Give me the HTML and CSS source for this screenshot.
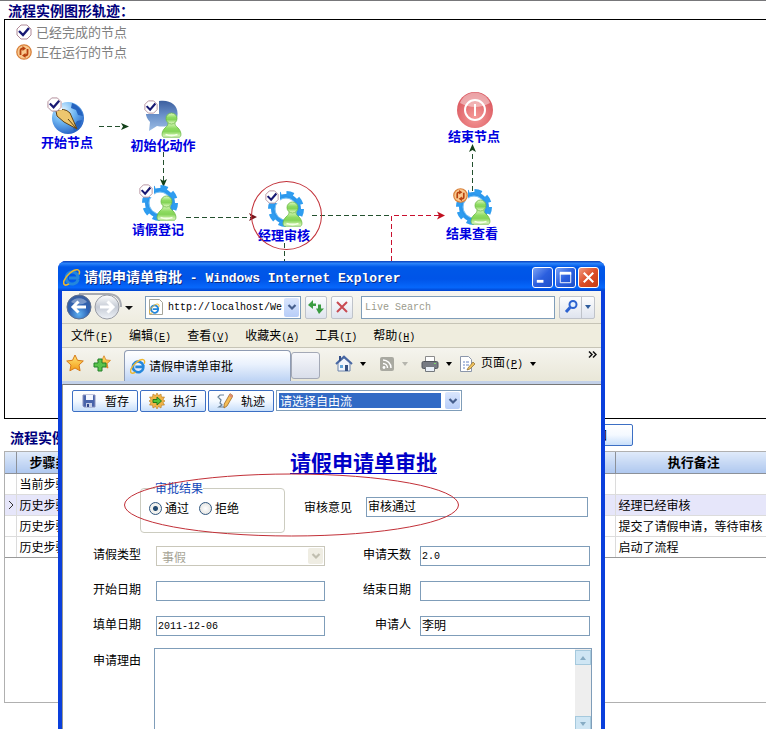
FILE: index.html
```html
<!DOCTYPE html>
<html lang="zh-CN">
<head>
<meta charset="utf-8">
<title>流程实例图形轨迹</title>
<link rel="stylesheet" href="styles.css">
</head>
<body>
<svg class="sprite" width="0" height="0" aria-hidden="true">
  <defs>
    <radialGradient id="globe" cx=".35" cy=".25" r=".85"><stop offset="0" stop-color="#dff3ff"/><stop offset=".45" stop-color="#6fb6f2"/><stop offset="1" stop-color="#1a55bd"/></radialGradient>
    <linearGradient id="bubble" x1="0" y1="0" x2="0" y2="1"><stop offset="0" stop-color="#3c5f9f"/><stop offset=".5" stop-color="#6c92cb"/><stop offset="1" stop-color="#9dbde4"/></linearGradient>
    <linearGradient id="green" x1="0" y1="0" x2="0" y2="1"><stop offset="0" stop-color="#e2fac4"/><stop offset=".4" stop-color="#8fdc62"/><stop offset=".6" stop-color="#84d457"/><stop offset="1" stop-color="#e8fccb"/></linearGradient>
    <radialGradient id="red" cx=".5" cy=".7" r=".7"><stop offset="0" stop-color="#f59a98"/><stop offset="1" stop-color="#d8525a"/></radialGradient>
    <radialGradient id="back" cx=".5" cy=".8" r=".8"><stop offset="0" stop-color="#5fb2f2"/><stop offset=".5" stop-color="#2d62b4"/><stop offset="1" stop-color="#385d9d"/></radialGradient>
    <linearGradient id="forward" x1="0" y1="0" x2="0" y2="1"><stop offset="0" stop-color="#fff"/><stop offset=".5" stop-color="#c5cbd5"/><stop offset="1" stop-color="#eff3f8"/></linearGradient>
    <linearGradient id="gold" x1="0" y1="0" x2="0" y2="1"><stop offset="0" stop-color="#ffe777"/><stop offset="1" stop-color="#f39a16"/></linearGradient>
    <symbol id="done" viewBox="0 0 16 16"><path d="M5 1h6l4 4v6l-4 4H5l-4-4V5z" fill="#fff" stroke="#b08a98"/><path d="M3 7l4 4 6-7" fill="none" stroke="#171873" stroke-width="2.4"/></symbol>
    <symbol id="running" viewBox="0 0 16 16"><circle cx="8" cy="8" r="7.200" fill="#f9c98e" stroke="#d9813c" stroke-width="1.300"/><path d="M4.500 11V6.500q0-2 2.500-2M11.500 5v4.500q0 2-2.500 2" fill="none" stroke="#b8420f" stroke-width="1.800"/><path d="M6.500 2l3.500 2.500L6.500 7zM9.500 9L6 11.500 9.500 14z" fill="#b8420f"/></symbol>
    <symbol id="person" viewBox="0 0 20 26"><path d="M6.500 10.500h7c-.5 2.500 1 3.500 3 5.500 3 2.700 4 8 1.500 9.200H2c-2.500-1.200-1.500-6.500 1.500-9.200 2-2 3.500-3 3-5.500z" fill="url(#green)" stroke="#69b944" stroke-width=".8"/><circle cx="10" cy="6.500" r="5.500" fill="url(#green)" stroke="#69b944" stroke-width=".8"/><path d="M4 22.500q6 2 12 0" fill="none" stroke="#f4ffe6" stroke-width="1.800"/></symbol>
    <symbol id="gear" viewBox="0 0 40 40"><circle cx="22" cy="21" r="12.500" fill="none" stroke="#2b97ec" stroke-width="5"/><circle cx="22" cy="21" r="15.500" fill="none" stroke="#2f9df0" stroke-width="5" stroke-dasharray="7 5.170"/><circle cx="22" cy="21" r="11" fill="none" stroke="#7cc4f6"/><circle cx="22" cy="21" r="10.500" fill="#fff"/><use href="#person" x="18" y="13" width="21" height="26"/></symbol>
    <symbol id="ie" viewBox="0 0 18 18"><path d="M15 11.500A6 6 0 1 1 15 8.500L14.900 10H6" fill="none" stroke="#2487dc" stroke-width="3"/><path d="M16 6.500C18 1 13 0 7 5 1 10-1 16 2 17c1.500.4 3-.5 4-1.200" fill="none" stroke="#eeb72e" stroke-width="1.600"/></symbol>
    <symbol id="star" viewBox="0 0 18 18"><path d="M9 1l2.500 5.300 5.800.7-4.300 4 1.100 5.800L9 14l-5.100 2.800L5 11 .7 7l5.800-.7z" fill="url(#gold)" stroke="#d77a18"/></symbol>
    <symbol id="caret" viewBox="0 0 8 8"><path d="M1 2h6L4 6z" fill="currentColor"/></symbol>
    <symbol id="chevron" viewBox="0 0 10 10"><path d="M1.500 3L5 6.500 8.500 3" fill="none" stroke="currentColor" stroke-width="2.200"/></symbol>
  </defs>
</svg>

<main class="page">
  <h1 class="section-title">流程实例图形轨迹：</h1>
  <section class="canvas">
    <ul class="legend">
      <li><svg class="i16"><use href="#done"/></svg>已经完成的节点</li>
      <li><svg class="i16"><use href="#running"/></svg>正在运行的节点</li>
    </ul>
    <svg class="edges" width="761" height="398" viewBox="5 20 761 398" aria-hidden="true">
      <g fill="none" stroke-dasharray="5 3">
        <path d="M99 126.500h26M163.500 152v29M186 217.500h66M312 215.500h79M284.500 243v22M472.500 191v-40" stroke="#24502f"/>
        <path d="M391.500 216v48M394 215.500h46" stroke="#c8102e"/>
      </g>
      <g fill="#124019"><path d="M121 123l8 3.500-8 3.500 2-3.500zM160 179l3.500 8 3.500-8-3.500 2zM469 152l3.500-8 3.500 8-3.500-2z"/><path d="M249 213l8 4-8 4 2-4z" fill="#72151b"/><path d="M437 211.500l8 4-8 4 2-4z" fill="#c01020"/></g>
    </svg>
    <div class="node start"><svg viewBox="0 0 40 40"><circle cx="21" cy="23" r="16" fill="url(#globe)"/><path d="M25 8c6 2 10 7 11 13l-5-1-2-5-5-2zM30 26l5-1-3 9-5 3-1-5z" fill="#2563bf"/><path d="M9 16q8-4 14 2l7 16-13-7-7-6z" fill="#edc66e" stroke="#604316"/><path d="M29 33l-8-9" stroke="#604316"/><path d="M0 2h15v13H0z" fill="#fff"/><use href="#done" x="0" y="2" width="15" height="15"/></svg><span>开始节点</span></div>
    <div class="node init"><svg viewBox="0 0 40 40"><path d="M16 3C28 1 37 8 34 20c-2 7-11 10-20 8l-8 5 1-9C-2 15 5 5 16 3z" fill="url(#bubble)"/><use href="#person" x="18" y="14" width="21" height="26"/><path d="M0 2h16v14H0z" fill="#fff"/><use href="#done" x="1" y="2" width="14" height="14"/></svg><span>初始化动作</span></div>
    <div class="node apply"><svg viewBox="0 0 40 40"><use href="#gear"/><path d="M0 2h16v13H0z" fill="#fff"/><use href="#done" x="1" y="2" width="14" height="14"/></svg><span>请假登记</span></div>
    <div class="node manager"><svg viewBox="0 0 40 40"><use href="#gear"/><path d="M0 2h16v13H0z" fill="#fff"/><use href="#done" x="1" y="2" width="14" height="14"/></svg><span>经理审核</span></div>
    <div class="node result"><svg viewBox="0 0 40 40"><use href="#gear"/><path d="M0 2h16v13H0z" fill="#fff"/><use href="#running" x="1" y="2" width="15" height="15"/></svg><span>结果查看</span></div>
    <div class="node end"><svg viewBox="0 0 40 40"><circle cx="21" cy="21" r="18" fill="url(#red)"/><path d="M6 14C11 0 31 0 36 14q-15 8-30 0z" fill="#fff" opacity=".45"/><circle cx="21" cy="21" r="10" fill="none" stroke="#fff" stroke-width="2"/><path d="M21 15v12" stroke="#fff" stroke-width="2"/></svg><span>结束节点</span></div>
    <div class="ring" aria-hidden="true"></div>
  </section>

  <div class="history-bar">
    <h2 class="section-title">流程实例</h2>
    <button class="btn" type="button">返回</button>
  </div>
  <section class="history">
    <table>
      <thead><tr><th class="mark"></th><th class="step">步骤类型</th><th>执行备注</th></tr></thead>
      <tbody>
        <tr><td></td><td>当前步骤</td><td></td></tr>
        <tr class="active"><td class="pointer"><svg width="6" height="8" viewBox="0 0 6 8"><path d="M1 0l4 4-4 4" fill="none" stroke="#333"/></svg></td><td>历史步骤</td><td>经理已经审核</td></tr>
        <tr><td></td><td>历史步骤</td><td>提交了请假申请，等待审核</td></tr>
        <tr><td></td><td>历史步骤</td><td>启动了流程</td></tr>
      </tbody>
    </table>
  </section>
</main>

<section class="window" aria-label="请假申请单审批">
  <header class="titlebar">
    <svg class="i18"><use href="#ie"/></svg>
    <span class="caption">请假申请单审批<span class="latin"> - Windows Internet Explorer</span></span>
    <button class="sys" type="button" aria-label="最小化"><svg viewBox="0 0 20 20"><path d="M4 14h7" stroke="#fff" stroke-width="3"/></svg></button>
    <button class="sys" type="button" aria-label="最大化"><svg viewBox="0 0 20 20"><path d="M4.500 5h11v10.500h-11z" fill="none" stroke="#fff"/><path d="M4 5.500h12" stroke="#fff" stroke-width="3"/></svg></button>
    <button class="sys close" type="button" aria-label="关闭"><svg viewBox="0 0 20 20"><path d="M5 5l10 10M15 5L5 15" stroke="#fff" stroke-width="2.200"/></svg></button>
  </header>
  <div class="chrome">
    <div class="address-row">
      <svg class="travel" width="69" height="28" viewBox="0 0 69 28"><path d="M13 1h30q12 1 12 13" fill="none" stroke="#a8abb2" stroke-width="2"/><circle cx="13" cy="14" r="12" fill="url(#back)" stroke="#5f6f8d"/><path d="M5 9a9 7 0 0 1 16 0q-8 5-16 0z" fill="#fff" opacity=".35"/><path d="M20 14H8M12.500 8.500L7 14l5.500 5.500" fill="none" stroke="#fff" stroke-width="3"/><circle cx="41" cy="14" r="12" fill="url(#forward)" stroke="#9a9da5"/><path d="M34 14h12M41.500 8.500L47 14l-5.500 5.500" fill="none" stroke="#fff" stroke-width="3"/><path d="M59 13h8l-4 4z" fill="#111"/></svg>
      <div class="address">
        <svg width="14" height="16" viewBox="0 0 14 16"><path d="M.5.500h10l3 3v12H.5z" fill="#fff" stroke="#a5a59a"/><use href="#ie" x="0" y="4" width="11" height="11"/></svg>
        <input class="latin" type="text" aria-label="地址" value="http://localhost/We">
        <span class="drop"><svg class="i10"><use href="#chevron"/></svg></span>
      </div>
      <button class="tool" type="button" aria-label="刷新"><svg class="i16" viewBox="0 0 16 16"><path d="M5 1L0 6l5 4V7h3V4.500H5zM11 15l5-5.500h-3V5.500h-3v4H8z" fill="#3a9c41"/></svg></button>
      <button class="tool" type="button" aria-label="停止"><svg class="i16" viewBox="0 0 16 16"><path d="M3 3l10 10M13 3L3 13" stroke="#c94a52" stroke-width="2"/></svg></button>
      <input class="search latin" type="text" aria-label="搜索" placeholder="Live Search">
      <button class="tool split" type="button" aria-label="开始搜索"><svg class="i16" viewBox="0 0 16 16"><circle cx="10" cy="5.500" r="3.500" fill="#e4f1ff" stroke="#2c62d0" stroke-width="2"/><path d="M7 8.500L3 13" stroke="#2c62d0" stroke-width="3"/></svg><span class="divider"></span><svg class="i8"><use href="#caret"/></svg></button>
    </div>
    <nav class="menu">
      <a href="#">文件<span class="latin">(<u>F</u>)</span></a><a href="#">编辑<span class="latin">(<u>E</u>)</span></a><a href="#">查看<span class="latin">(<u>V</u>)</span></a><a href="#">收藏夹<span class="latin">(<u>A</u>)</span></a><a href="#">工具<span class="latin">(<u>T</u>)</span></a><a href="#">帮助<span class="latin">(<u>H</u>)</span></a>
    </nav>
    <div class="tabs">
      <svg class="i18"><use href="#star"/></svg>
      <svg class="i18 add" viewBox="0 0 18 18"><use href="#star" x="4" y="1" width="14" height="14"/><path d="M5 5h4v4h4v4H9v4H5v-4H1V9h4z" fill="#5bc34b" stroke="#23812a"/></svg>
      <div class="tab"><svg class="i16"><use href="#ie"/></svg>请假申请单审批</div>
      <div class="new-tab"></div>
      <div class="commands">
        <svg class="i18" viewBox="0 0 18 18"><path d="M3 8v8h12V8L9 3z" fill="#f0f4fb" stroke="#6a83ac"/><path d="M1 9l8-7.500L17 9" fill="none" stroke="#4867a3" stroke-width="2"/><path d="M4 1h2v5H4z" fill="#34508a"/><path d="M5 10h3v3H5z" fill="#5fa3d8"/><path d="M10 10h3v6h-3z" fill="#355081"/></svg>
        <svg class="i8"><use href="#caret"/></svg>
        <svg class="i16 group" viewBox="0 0 16 16"><rect x="1" y="1" width="14" height="14" rx="2" fill="#a9a9a1"/><circle cx="5" cy="11.500" r="1.400" fill="#fff"/><path d="M4 7.500a4.500 4.500 0 0 1 4.500 4.500M4 4a8 8 0 0 1 8 8" fill="none" stroke="#fff" stroke-width="1.500"/></svg>
        <svg class="i8 dim"><use href="#caret"/></svg>
        <svg class="i18 group" viewBox="0 0 18 18"><path d="M4.500 1.500h9v6h-9z" fill="#fff" stroke="#8b8b8b"/><rect x="1" y="6.500" width="16" height="7" rx="1.500" fill="#777b82" stroke="#51555c"/><path d="M4.500 11.500h9v5h-9z" fill="#eaf0f8" stroke="#74787d"/><path d="M13 8.500h2" stroke="#7bdc68"/></svg>
        <svg class="i8"><use href="#caret"/></svg>
        <svg class="i16" viewBox="0 0 16 16"><path d="M1.500.5h8l3 3v12h-11z" fill="#fff" stroke="#8b96ab"/><path d="M4 6h2M4 9h2M4 12h2M7 6h3M7 9h3" stroke="#6782c0"/><path d="M9 12l5-6 2 2-5 5-3 1z" fill="#edc05d" stroke="#8a6a2d" stroke-width=".7"/></svg>
        <a class="page-menu" href="#">页面<span class="latin">(<u>P</u>)</span></a>
        <svg class="i8"><use href="#caret"/></svg>
      </div>
      <svg class="more" width="9" height="7" viewBox="0 0 9 7"><path d="M1 .5l3 3-3 3M5 .5l3 3-3 3" fill="none" stroke="#111" stroke-width="1.500"/></svg>
    </div>
  </div>

  <form class="sheet">
    <div class="actions">
      <button class="btn" type="button"><svg class="i16" viewBox="0 0 16 16"><path d="M2 2h12v12H3l-1-1z" fill="#4964aa" stroke="#8a91bd"/><path d="M5 2h7v5H5z" fill="#f4f7ff"/><path d="M5 10h6v4H5z" fill="#c7d0e7"/><path d="M6 11h2v3H6z" fill="#33488a"/></svg>暂存</button>
      <button class="btn" type="button"><svg class="i16" viewBox="0 0 16 16"><path d="M8 0l1.500 2.500L12 1l.5 3L15.500 4 14 6.500 16 8l-2 1.500 1.500 2.500-3 .2L12 15l-2.500-1.500L8 16l-1.500-2.500L4 15l-.5-2.800-3-.2L2 9.500 0 8l2-1.500L.5 4l3 0L4 1l2.500 1.500z" fill="#f0b348" stroke="#b77a20" stroke-width=".6"/><path d="M4 6.500h4V4l4.500 4L8 12V9.500H4z" fill="#52c537" stroke="#24791b"/></svg>执行</button>
      <button class="btn" type="button"><svg class="i16" viewBox="0 0 16 16"><path d="M7 2H3L1 4l3 3-1 3 2 2-3 2h5" fill="none" stroke="#688198" stroke-width="1.200"/><path d="M13 .7l3 2L10 13l-3 2 .2-4z" fill="#f5bd55" stroke="#a06b26" stroke-width=".8"/><path d="M13 .7l3 2-1 2-3.200-2z" fill="#db8b75"/></svg>轨迹</button>
      <div class="combo flow"><select aria-label="自由流"><option>请选择自由流</option></select><span class="drop"><svg class="i10"><use href="#chevron"/></svg></span></div>
    </div>
    <h2 class="form-title">请假申请单审批</h2>
    <div class="review">
      <fieldset>
        <legend>审批结果</legend>
        <label><input type="radio" name="verdict" checked>通过</label>
        <label><input type="radio" name="verdict">拒绝</label>
      </fieldset>
      <label for="opinion">审核意见</label>
      <input id="opinion" class="field" type="text" value="审核通过">
    </div>
    <div class="fields">
      <label for="kind">请假类型</label>
      <div class="combo disabled"><select id="kind" disabled><option>事假</option></select><span class="drop"><svg class="i10"><use href="#chevron"/></svg></span></div>
      <label class="second" for="days">申请天数</label>
      <input id="days" class="field latin" type="text" value="2.0">
      <label for="from">开始日期</label>
      <input id="from" class="field latin" type="text">
      <label class="second" for="to">结束日期</label>
      <input id="to" class="field latin" type="text">
      <label for="filed">填单日期</label>
      <input id="filed" class="field latin" type="text" value="2011-12-06">
      <label class="second" for="who">申请人</label>
      <input id="who" class="field" type="text" value="李明">
    </div>
    <div class="reason">
      <label for="reason">申请理由</label>
      <div class="memo"><textarea id="reason"></textarea><div class="scroll" aria-hidden="true"><span><svg class="i8 up"><use href="#caret"/></svg></span><span><svg class="i8"><use href="#caret"/></svg></span></div></div>
    </div>
    <svg class="oval" width="335" height="64" viewBox="0 0 335 64" aria-hidden="true"><ellipse cx="167.500" cy="32" rx="167" ry="31" fill="none" stroke="#c23038"/></svg>
  </form>
</section>
</body>
</html>
```

FILE: styles.css
```css
* { box-sizing: border-box; }

body {
  margin: 0;
  height: 100vh;
  overflow: hidden;
  position: relative;
  background: #fff;
  color: #000;
  font: 12px/16px "Noto Sans CJK SC", sans-serif;
}

input, button, select, textarea { font: inherit; color: inherit; margin: 0; }
h1, h2, ul { margin: 0; padding: 0; }
a { color: inherit; text-decoration: none; }
svg { display: block; flex: none; }
.sprite { position: absolute; }

.i8 { width: 8px; height: 8px; }
.i10 { width: 10px; height: 10px; }
.i16 { width: 16px; height: 16px; }
.i18 { width: 18px; height: 18px; }
.latin { font-family: "Liberation Mono", monospace; font-size: 10px; }

/* Page behind the pop-up */
.page { border-top: 1px solid #77777a; padding-left: 4px; }
.section-title { font-size: 14px; line-height: 18px; font-weight: 700; color: #00007c; padding-left: 4px; }

.canvas { position: relative; height: 400px; border: 1px solid #000; border-right: 0; }
.legend { list-style: none; padding: 2px 0 0 11px; font-size: 13px; line-height: 20px; color: #808080; }
.legend li { display: flex; align-items: center; gap: 4px; }
.edges { position: absolute; left: 0; top: 0; }

.node { position: absolute; width: 80px; display: flex; flex-direction: column; align-items: center; font-size: 13px; line-height: 14px; font-weight: 700; color: #0000e0; }
.node svg { width: 40px; height: 40px; }
.start { left: 22px; top: 75px; }
.init { left: 118px; top: 78px; }
.apply { left: 113px; top: 162px; }
.manager { left: 239px; top: 168px; }
.result { left: 427px; top: 166px; }
.end { left: 429px; top: 69px; }
.ring { position: absolute; left: 246px; top: 161px; width: 71px; height: 69px; border: 1px solid #c23038; border-radius: 50%; }

.history-bar { display: grid; grid-template-columns: 553px 76px; align-items: center; height: 32px; }
.history-bar .section-title { padding: 4px 0 0 6px; }

.btn {
  display: flex; align-items: center; justify-content: center; gap: 12px;
  height: 22px; padding: 0 4px 1px;
  border: 1px solid #3c6fc4; border-radius: 2px;
  background: linear-gradient(#fff, #f4f9ff 50%, #c8dffa);
}

.history { height: 252px; margin-right: -8px; border: 1px solid #b0b0b0; }
.history table { width: 100%; border-collapse: collapse; table-layout: fixed; }
.history th { height: 21px; padding: 0; font-size: 13px; border-right: 1px solid #8c9199; border-bottom: 1px solid #8c9199; background: linear-gradient(#dfeafa, #afc8ef); }
.history .mark { width: 11px; }
.history .step { width: 599px; text-align: left; padding-left: 13px; }
.history td { height: 21px; padding: 0 3px; border-right: 1px solid #dcdcdc; border-bottom: 1px solid #dcdcdc; white-space: nowrap; }
.history .active { background: #e6e6fa; }
.history tbody tr:last-child td { border-bottom-color: #999; }

/* Browser window */
.window {
  position: absolute; left: 58px; top: 261px; width: 547px;
  border: solid #0a3fdc; border-width: 0 4px;
  border-radius: 8px 8px 0 0;
  background: #0a3fdc;
}
.titlebar {
  display: flex; align-items: center; gap: 2px; height: 30px;
  margin: 0 -4px; padding: 2px 6px 0 5px;
  border-radius: 8px 8px 0 0;
  background: linear-gradient(#0a3fb8, #2a83fa 8%, #0058e8 20%, #0054e8 60%, #0667fb 88%, #0043cf);
}
.caption { flex: 1; padding-left: 1px; color: #fff; font-size: 14px; font-weight: 700; white-space: pre; text-shadow: 1px 1px #0b2c86; }
.caption .latin { font-size: 13px; }
.sys { width: 21px; height: 21px; padding: 0; border: 1px solid #fff; border-radius: 3px; background: linear-gradient(135deg, #7ba2f4, #2b5fdf 50%, #1d4fc9); }
.sys.close { background: linear-gradient(135deg, #f09a80, #dd4d27 50%, #c63c14); }

.chrome { background: #f0eee2; }
.address-row { display: flex; align-items: center; height: 33px; padding: 0 6px 0 4px; border-bottom: 1px solid #c6c4b6; background: linear-gradient(#f7f6f2, #eeecdf); }
.travel { margin-right: 10px; }
.address { display: flex; align-items: center; width: 156px; height: 23px; padding: 1px 1px 1px 3px; border: 1px solid #7f9db9; background: #fff; }
.address input { flex: 1; min-width: 0; padding: 2px 0 0 5px; border: 0; background: none; }
.drop { display: grid; place-items: center; flex: none; width: 15px; align-self: stretch; border-radius: 2px; background: linear-gradient(#dae6fd, #b7cdf8); color: #465f8e; }
.tool { display: flex; align-items: center; justify-content: center; width: 22px; height: 23px; padding: 0; margin-left: 4px; border: 1px solid #bfc3ca; border-radius: 2px; background: linear-gradient(#fcfdfe, #dfe4ee); }
.search { flex: 1; min-width: 0; height: 23px; margin-left: 8px; padding: 0 3px; border: 1px solid #7f9db9; background: #fff; }
.search::placeholder { color: #9a9a8c; }
.tool.split { width: 36px; gap: 2px; color: #2e5c9c; }
.divider { width: 1px; height: 100%; background: #bfc3ca; }

.menu { display: flex; gap: 16px; height: 24px; align-items: center; padding: 1px 0 0 9px; border-bottom: 1px solid #c6c4b6; background: #efedde; }

.tabs { display: flex; align-items: center; height: 36px; padding: 0 4px 4px; border-bottom: 3px solid #c3d1e8; background: linear-gradient(#f5f4ee, #e9e7d8); }
.add { margin-left: 9px; }
.tab { display: flex; align-items: center; gap: 3px; align-self: flex-end; width: 167px; height: 31px; margin: 0 0 -4px 13px; padding-left: 5px; border: 1px solid #8e9bb3; border-bottom: 0; border-radius: 4px 4px 0 0; background: linear-gradient(#fff, #e9f1fd 45%, #bdd3f4); }
.new-tab { align-self: flex-end; width: 29px; height: 27px; margin-bottom: -2px; border: 1px solid #a4a9b6; border-radius: 3px; background: linear-gradient(#f6f7fb, #d9deea); }
.commands { display: flex; align-items: center; gap: 6px; margin-left: 15px; padding-top: 2px; }
.group { margin-left: 6px; }
.dim { color: #b5b5ad; }
.more { margin: 0 0 16px auto; }

/* Form page inside the window */
.sheet { position: relative; padding: 5px 8px 16px 9px; border-top: 1px solid #777; border-left: 1px solid #9a9a90; background: #fff; }
.actions { display: flex; gap: 2px; }
.actions .btn { width: 66px; gap: 6px; }
.actions .btn svg { margin-right: 2px; }

.combo { display: flex; height: 21px; padding: 1px; border: 1px solid #7f9db9; background: #fff; }
.combo select { appearance: none; flex: 1; min-width: 0; height: 15px; margin: 1px; padding: 0 1px; border: 0; border-radius: 0; line-height: 15px; background: #fff; }
.flow { width: 186px; }
.flow select { margin-right: 4px; background: #316ac5; color: #fff; }
.disabled { border-color: #c9c7ba; }
.disabled select { padding-left: 3px; color: #a6a496; opacity: 1; }
.disabled .drop { background: #efede3; color: #c0beaf; }

.form-title { margin: 36px 0 0 218px; width: max-content; font-size: 21px; line-height: 26px; font-weight: 700; color: #0000c8; text-decoration: underline; text-decoration-thickness: 1px; text-underline-offset: 3px; }

.review { display: flex; align-items: center; margin: 6px 0 0 68px; }
fieldset { display: flex; align-items: center; gap: 10px; width: 145px; height: 53px; margin: 0; padding: 0 8px 12px; border: 1px solid #ccccc0; border-radius: 4px; }
legend { padding: 0; margin-left: 6px; color: #1548b8; }
fieldset label { display: flex; align-items: center; gap: 3px; }
fieldset input { appearance: none; width: 13px; height: 13px; border: 1px solid #31577f; border-radius: 50%; background: radial-gradient(#fff, #dcdcd8); }
fieldset input:checked { background: radial-gradient(circle, #234a71 2px, #f2f2ee 3px); }
.review > label { margin: 0 14px 0 19px; }
.field { min-width: 0; height: 20px; padding: 0 1px 3px; border: 1px solid #7f9db9; border-radius: 0; background: #fff; }
.field.latin { padding-bottom: 0; }
.review .field { flex: 1; max-width: 222px; }

.fields { display: grid; grid-template-columns: 63px 169px 95px 170px; gap: 15px 0; align-items: center; margin: 13px 0 0 21px; }
.fields > * { height: 20px; }
.second { text-align: right; padding-right: 9px; }

.reason { display: flex; margin: 12px 0 0 21px; }
.reason label { width: 61px; padding-top: 4px; }
.memo { display: flex; width: 438px; height: 85px; border: 1px solid #7f9db9; }
.memo textarea { flex: 1; min-width: 0; padding: 2px; border: 0; resize: none; background: #fff; }
.scroll { display: flex; flex-direction: column; justify-content: space-between; width: 16px; padding: 1px 0; background: #eee; }
.scroll span { display: grid; place-items: center; height: 15px; border: 1px solid #a5c9dd; background: #cfe6f4; color: #87acc4; }
.up { transform: rotate(180deg); }

.oval { position: absolute; left: 61px; top: 88px; }
```
